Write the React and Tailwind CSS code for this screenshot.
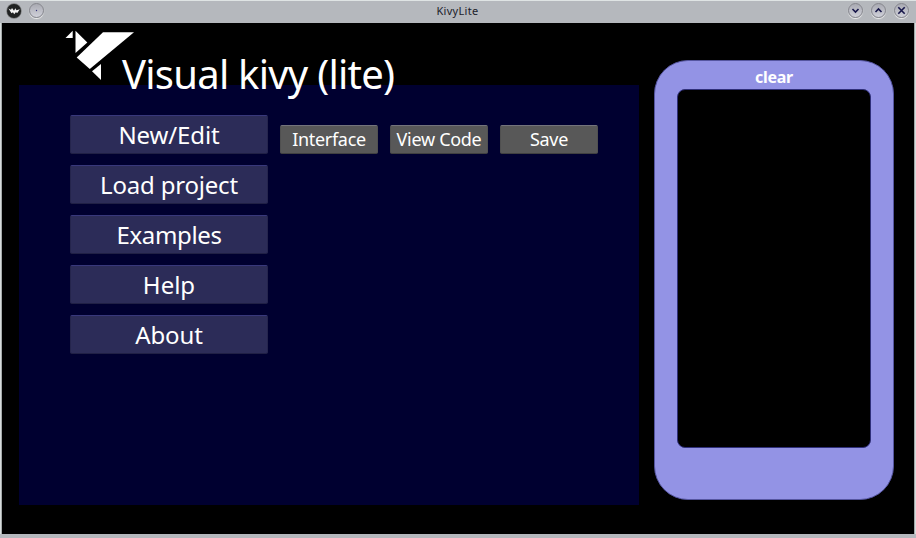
import React from 'react';

const menu = [
  { label: 'New/Edit', spacing: 'tracking-[-0.1px]' },
  { label: 'Load project', spacing: 'tracking-[-0.2px]' },
  { label: 'Examples', spacing: 'tracking-[-0.35px]' },
  { label: 'Help', spacing: 'tracking-[0px]' },
  { label: 'About', spacing: 'tracking-[-0.1px]' },
];
const tools = ['Interface', 'View Code', 'Save'];

function RoundButton({ children }) {
  return (
    <span className="flex size-[15px] items-center justify-center rounded-full border border-[#85868d] bg-linear-to-b from-[#a9aab2] to-[#d0d1da] shadow-[0_1px_1px_#eeeeee]">
      <svg viewBox="0 0 13 13" className="size-[13px] shrink-0" fill="none" stroke="#17174a" strokeWidth="1.6">
        {children}
      </svg>
    </span>
  );
}

function TitleBar() {
  return (
    <header className="grid h-[23px] shrink-0 grid-cols-3 items-center border-t border-[#dfe4e4] bg-[#b5b8bd] pr-[7px] pb-[3px] pl-[6px]">
      <div className="flex items-center gap-[7px]">
        <svg viewBox="0 0 16 16" className="size-4">
          <circle cx="8" cy="8" r="7.7" fill="#77797a" />
          <circle cx="8" cy="8" r="7" fill="#202222" />
          <path d="M2.5 5.5 5 6.8 6 5 8 7.8 9.3 5.3 10.5 7.2 13.8 6.2 11.3 10 9.8 9.3 8.2 11.2 7 9.2 5.5 10.2Z" fill="#f4f4f4" />
        </svg>
        <RoundButton>
          <circle cx="6.5" cy="6.5" r="0.7" fill="#35357e" stroke="none" />
        </RoundButton>
      </div>
      <h1 className="text-center text-[11px] leading-[14px] tracking-[0.3px] text-[#20212b]">KivyLite</h1>
      <div className="flex items-center justify-end gap-[8px]">
        <RoundButton><path d="m3.5 5 3 3 3-3" /></RoundButton>
        <RoundButton><path d="m3.5 8 3-3 3 3" /></RoundButton>
        <RoundButton><path d="m3.3 3.3 6.4 6.4m0-6.4-6.4 6.4" /></RoundButton>
      </div>
    </header>
  );
}

function Bird() {
  return (
    <svg viewBox="0 0 70 52" className="mt-[7px] ml-[46px] h-[52px] w-[70px] shrink-0" fill="#ffffff">
      <path d="M.5 8 7.7 .8V8Z" />
      <path d="M10.5 .8 22.3 12.5 10.5 23Z" />
      <path d="M38 2.3H69L24.8 39 11.7 27.5Z" />
      <path d="M27 41.3 36 34V50Z" />
    </svg>
  );
}

export default function App() {
  return (
    <div className="flex h-[538px] w-[916px] flex-col overflow-hidden bg-[#b5b8bd] font-['Noto_Sans',sans-serif] text-white">
      <TitleBar />
      <main className="mr-[2px] ml-[2px] flex h-[511px] border-x-0 bg-black pl-[17px] shadow-[-1px_0_0_#a5aaaa,1px_0_0_#a5aaaa,-2px_0_0_#d7dcdd,2px_0_0_#d7dcdd]">
        <div className="w-[620px] shrink-0">
          <div className="relative z-10 flex h-[62px]">
            <Bird />
            <h2 className="mt-[24px] -ml-[13px] text-[40px] leading-[54px] tracking-[-0.75px] whitespace-nowrap">Visual kivy (lite)</h2>
          </div>
          <section className="flex h-[420px] gap-3 bg-[#000030] pt-[30px] pl-[51px]">
            <nav className="flex flex-col gap-[11px]">
              {menu.map(({ label, spacing }) => (
                <button key={label} className={`h-[39px] w-[198px] rounded-[2px] border border-t-[#38387c] border-x-[#25254d] border-b-[#202045] bg-[#2c2c58] pt-px text-[24px] leading-[36px] ${spacing}`}>
                  {label}
                </button>
              ))}
            </nav>
            <div className="flex gap-3 pt-[10px]">
              {tools.map((label) => (
                <button key={label} className="h-[29px] w-[98px] rounded-[2px] border border-t-[#74747c] border-x-[#505050] border-b-[#404040] bg-[#585858] text-[18px] leading-[27px] tracking-[-0.3px] whitespace-nowrap">
                  {label}
                </button>
              ))}
            </div>
          </section>
        </div>
        <aside className="mt-[37px] ml-[15px] flex h-[440px] w-[240px] flex-col items-center rounded-[34px] border border-[#5555a0] bg-[#9393e5]">
          <button className="h-[28px] pt-[4px] text-[16px] leading-[22px] font-bold tracking-[-0.3px]">clear</button>
          <div className="h-[359px] w-[194px] rounded-[8px] border border-[#30307a] bg-black" />
        </aside>
      </main>
    </div>
  );
}
